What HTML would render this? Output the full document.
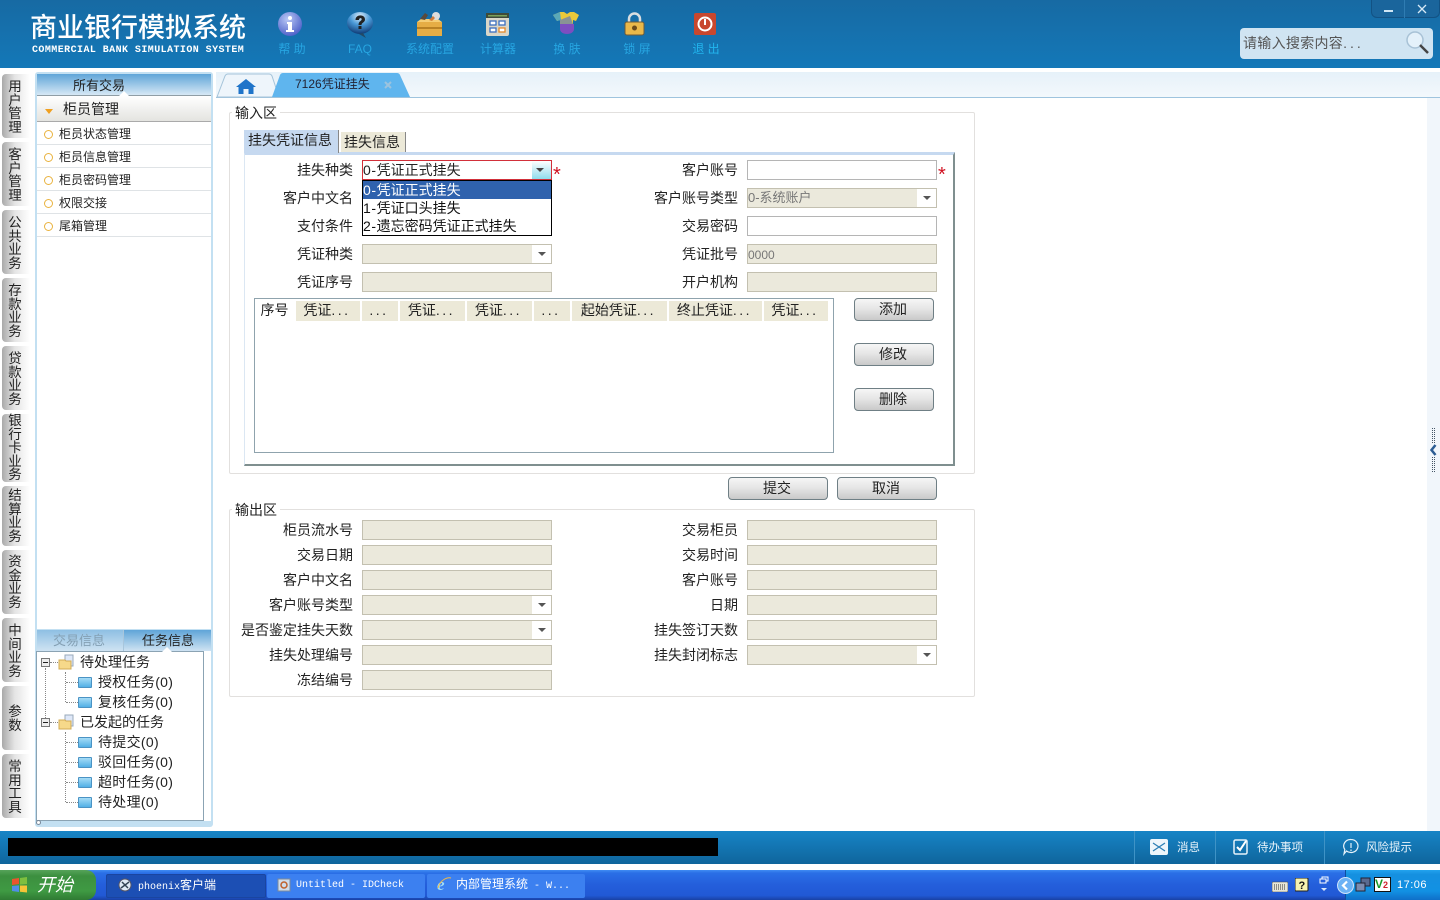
<!DOCTYPE html>
<html lang="zh"><head><meta charset="utf-8"><title>商业银行模拟系统</title>
<style>
html,body{margin:0;padding:0;width:1440px;height:900px;overflow:hidden;background:#fff}
body{font-family:"Liberation Sans","Noto Sans CJK SC",sans-serif;font-size:14px;color:#222;position:relative}
div,span,svg{position:absolute;box-sizing:border-box}
.t{white-space:nowrap}
#hd{left:0;top:0;width:1440px;height:68px;background:linear-gradient(#176aa3,#1478b8)}
.nl{top:41px;height:16px;line-height:16px;font-size:12px;color:#27a6e2;text-align:center;width:70px;white-space:nowrap}
.st{left:2px;width:28px;background:linear-gradient(90deg,#a9a9a9,#e4e4e4 45%,#fff);border-radius:4px 0 0 4px;text-align:center;line-height:13.5px;font-size:13.5px;color:#222;padding-left:0}
.st span{position:static;display:block;width:26px}
.mi{left:37px;width:174px;height:23px;border-bottom:1px solid #dfe3e6;background:#fff;font-size:12px;line-height:25px;padding-left:22px;color:#222}
.mi i{position:absolute;left:7px;top:8px;width:7px;height:7px;border:1.5px solid #e9b33f;border-radius:50%}
.l{width:130px;height:20px;line-height:20px;text-align:right;white-space:nowrap;color:#222}
.f{width:190px;height:20px;border:1px solid #c3c0b0;background:#ebe9dc;font-size:12px;line-height:18px;color:#777;padding-left:0;white-space:nowrap}
.w{background:#fff;border-color:#b5b5b5}
.ar{right:0;top:0;width:19px;height:18px;background:#fff}
.ar:after{content:"";position:absolute;left:6px;top:7px;border:4px solid transparent;border-top:4px solid #555;border-bottom:0}
.th{top:301px;height:20px;background:#ece9d8;border-right:1px solid #fff;line-height:19px;text-align:center;color:#222;white-space:nowrap;padding-right:2px}
.d{position:static;letter-spacing:2.5px}
.n{position:static;letter-spacing:.6px}
.b{border:1px solid #6f7f85;border-radius:4px;background:linear-gradient(#f6f6f6,#e6e6e6 45%,#c9c9c9);text-align:center;color:#222;padding-right:2px}
.tr{white-space:nowrap;height:20px;line-height:20px;font-size:14px;color:#222;letter-spacing:.3px}
.fo{left:78px;width:14px;height:11px;background:linear-gradient(#a6dcf6,#52b0e6);border:1px solid #4a93c4;border-radius:1px}
.dh{height:0;border-top:1px dotted #888;width:12px}
.dv{width:0;border-left:1px dotted #888}
.tb{top:874px;height:24px;line-height:22px;font-family:"Liberation Mono","Noto Sans CJK SC",monospace;font-size:10px;color:#fff;white-space:nowrap;border-radius:2px}
.tb span{position:static;font-size:12px}
.tb.m{line-height:24px}
.notch{border:5px solid transparent;border-bottom:5px solid #fff;border-top:0}
</style></head><body>

<div id="hd"></div>
<div class="t" style="left:30px;top:11px;font-size:27px;line-height:34px;color:#fff;letter-spacing:0;font-weight:500">商业银行模拟系统</div>
<div class="t" style="left:32px;top:43px;font-family:'Liberation Mono',monospace;font-weight:bold;font-size:10px;line-height:14px;color:#fff;letter-spacing:.43px;padding-top:1px">COMMERCIAL BANK SIMULATION SYSTEM</div>

<svg style="left:277px;top:11px" width="26" height="26" viewBox="0 0 26 26"><defs><radialGradient id="g1" cx=".4" cy=".3" r=".8"><stop offset="0" stop-color="#b9c8f5"/><stop offset="1" stop-color="#4256c4"/></radialGradient></defs><circle cx="13" cy="13" r="12" fill="url(#g1)"/><circle cx="13" cy="7" r="2" fill="#fff"/><path d="M10 11h5v8h2v2H9v-2h2v-6h-1z" fill="#fff"/></svg>
<svg style="left:346px;top:11px" width="28" height="27" viewBox="0 0 28 27"><defs><radialGradient id="g2" cx=".5" cy=".2" r=".85"><stop offset="0" stop-color="#dfeefa"/><stop offset=".45" stop-color="#4a9ad8"/><stop offset="1" stop-color="#08306a"/></radialGradient></defs><ellipse cx="14" cy="12" rx="13" ry="11" fill="url(#g2)"/><path d="M17 22l3 5-7-4z" fill="#234a66"/><path d="M9.500 9c0-6 9.500-6 9.500-.5 0 3-3.500 3-3.500 5.500h-3c0-4 3.200-4 3.200-5.800 0-1.500-2.700-1.500-2.700.8z" fill="#222"/><rect x="12.500" y="15" width="3" height="3" fill="#222"/></svg>
<svg style="left:416px;top:11px" width="27" height="26" viewBox="0 0 27 26"><rect x="1" y="11" width="25" height="14" fill="#e6ad45"/><rect x="1" y="16" width="25" height="2" fill="#b98124"/><path d="M1 11l4-3h17l4 3z" fill="#f5cd75"/><path d="M4 8l5-6 3 2-3 5z" fill="#5a4a3c"/><circle cx="20" cy="5" r="4" fill="#ddd"/><path d="M13 9l4-4 2 2-3 3z" fill="#d07a3a"/></svg>
<svg style="left:486px;top:13px" width="23" height="23" viewBox="0 0 23 23"><rect width="23" height="23" rx="2" fill="#d9d6c8"/><rect width="23" height="5" fill="#3e4a3a"/><rect x="2" y="2" width="19" height="1.500" fill="#7aa05a"/><g fill="#fff" stroke="#3c6fc0" stroke-width="1.300"><rect x="4" y="8" width="6" height="4"/><rect x="13" y="8" width="6" height="4"/><rect x="4" y="15" width="6" height="4"/><rect x="13" y="15" width="6" height="4" stroke="#e08a2c"/></g></svg>
<svg style="left:552px;top:11px" width="28" height="24" viewBox="0 0 28 24"><path d="M1 4l7-3h4l3 2 3-2h4l5 3-3 6-3-1v5H8V9l-3 1z" fill="#e9c93a"/><path d="M1 4l7-3 1 8-4 1z" fill="#5aa8b8"/><path d="M8 13h14v5c0 3-3 5-7 5s-7-2-7-5z" fill="#7d4ec0"/><path d="M8 9l10-4 3 8H8z" fill="#4a6fd0" opacity=".6"/></svg>
<svg style="left:624px;top:12px" width="21" height="24" viewBox="0 0 21 24"><path d="M5 11V7a5.500 5.500 0 0 1 11 0v4" fill="none" stroke="#d8dde0" stroke-width="2.500"/><rect x="1" y="10" width="19" height="13" rx="2" fill="#e9b84a" stroke="#6b5a3a"/><circle cx="10.500" cy="16" r="2.500" fill="#6b4a1a"/></svg>
<svg style="left:694px;top:13px" width="22" height="22" viewBox="0 0 22 22"><rect width="22" height="22" rx="2" fill="#c8472e"/><circle cx="11" cy="11" r="6.500" fill="none" stroke="#fff" stroke-width="2"/><rect x="10" y="6" width="2" height="6" fill="#fff"/></svg>

<div class="nl" style="left:257px">帮 助</div>
<div class="nl" style="left:325px">FAQ</div>
<div class="nl" style="left:395px">系统配置</div>
<div class="nl" style="left:463px">计算器</div>
<div class="nl" style="left:532px">换 肤</div>
<div class="nl" style="left:602px">锁 屏</div>
<div class="nl" style="left:671px;color:#22b5ee">退 出</div>

<div style="left:1371px;top:0;width:69px;height:18px;background:#1a659c;border:1px solid #125284;border-top:0;border-radius:0 0 6px 6px"></div>
<div style="left:1404px;top:0;width:1px;height:18px;background:#2f7cb2"></div>
<div style="left:1384px;top:10px;width:9px;height:2px;background:#cfe6f5"></div>
<svg style="left:1417px;top:4px" width="10" height="10" viewBox="0 0 10 10"><path d="M1 1l8 8M9 1L1 9" stroke="#d6e9f6" stroke-width="1.300"/></svg>

<div style="left:1240px;top:28px;width:193px;height:31px;background:#d0e4f2;border-radius:4px"></div>
<div class="t" style="left:1243px;top:33px;line-height:20px;font-size:14px;color:#555;letter-spacing:.3px">请输入搜索内容<span class="d" style="letter-spacing:3px">...</span></div>
<svg style="left:1405px;top:30px" width="25" height="25" viewBox="0 0 25 25"><circle cx="10" cy="10" r="8" fill="#e4f1fa" stroke="#a8c2d6" stroke-width="1.500"/><path d="M15 15l8 8" stroke="#444" stroke-width="2.500"/></svg>

<!-- left vertical tabs -->
<div class="st" style="top:74px;height:64px;padding-top:6px"><span>用<br>户<br>管<br>理</span></div>
<div class="st" style="top:142px;height:64px;padding-top:6px"><span>客<br>户<br>管<br>理</span></div>
<div class="st" style="top:210px;height:64px;padding-top:6px"><span>公<br>共<br>业<br>务</span></div>
<div class="st" style="top:278px;height:64px;padding-top:6px"><span>存<br>款<br>业<br>务</span></div>
<div class="st" style="top:346px;height:64px;padding-top:6px"><span>贷<br>款<br>业<br>务</span></div>
<div class="st" style="top:414px;height:68px;padding-top:0"><span>银<br>行<br>卡<br>业<br>务</span></div>
<div class="st" style="top:486px;height:60px;padding-top:3px"><span>结<br>算<br>业<br>务</span></div>
<div class="st" style="top:550px;height:64px;padding-top:5px"><span>资<br>金<br>业<br>务</span></div>
<div class="st" style="top:618px;height:64px;padding-top:6px"><span>中<br>间<br>业<br>务</span></div>
<div class="st" style="top:686px;height:64px;padding-top:19px"><span>参<br>数</span></div>
<div class="st" style="top:754px;height:64px;padding-top:6px"><span>常<br>用<br>工<br>具</span></div>

<!-- left panel -->
<div style="left:35px;top:72px;width:178px;height:755px;background:#c3e0f2;border-radius:3px"></div>
<div style="left:37px;top:74px;width:174px;height:21px;background:linear-gradient(#5fa5d8,#d6e8f5)"></div>
<div class="t" style="left:73px;top:76px;font-size:13px;line-height:19px;color:#222">所有交易</div>
<div style="left:37px;top:95px;width:174px;height:1px;background:#8f9da5"></div>
<div style="left:37px;top:96px;width:174px;height:533px;background:#fff"></div>
<div class="notch" style="left:119px;top:91px"></div>
<div style="left:37px;top:96px;width:174px;height:26px;background:linear-gradient(#fff,#e4e4e0);border-bottom:1px solid #aaa"></div>
<div style="left:45px;top:109px;border:4px solid transparent;border-top:5px solid #f0a020;border-bottom:0"></div>
<div class="t" style="left:63px;top:99px;line-height:20px;font-size:14px">柜员管理</div>
<div class="mi" style="top:122px"><i></i>柜员状态管理</div>
<div class="mi" style="top:145px"><i></i>柜员信息管理</div>
<div class="mi" style="top:168px"><i></i>柜员密码管理</div>
<div class="mi" style="top:191px"><i></i>权限交接</div>
<div class="mi" style="top:214px"><i></i>尾箱管理</div>

<div style="left:37px;top:630px;width:174px;height:21px;background:linear-gradient(#5fa5d8,#cfe3f2)"></div>
<div style="left:37px;top:630px;width:86px;height:21px;background:linear-gradient(#8ebfe3,#cfe3f2)"></div>
<div style="left:123px;top:630px;width:1px;height:21px;background:#a8c6dc"></div>
<div class="t" style="left:53px;top:631px;font-size:13px;line-height:19px;color:#84a0b4">交易信息</div>
<div class="t" style="left:142px;top:631px;font-size:13px;line-height:19px;color:#222">任务信息</div>
<div style="left:36px;top:651px;width:168px;height:170px;background:#fff;border:1px solid #8ba3b3"></div>
<div style="left:204px;top:651px;width:7px;height:170px;background:#fff"></div>
<div class="notch" style="left:162px;top:647px;border-bottom-color:#fff"></div>
<div style="left:36px;top:820px;width:5px;height:5px;border:1px solid #789;border-radius:50%;background:#fff"></div>

<div class="dv" style="left:45px;top:668px;height:56px"></div>
<div class="dv" style="left:65px;top:672px;height:30px"></div>
<div class="dv" style="left:65px;top:732px;height:70px"></div>
<div class="dh" style="left:50px;top:662px;width:8px"></div>
<div class="dh" style="left:50px;top:722px;width:8px"></div>
<div class="dh" style="left:66px;top:682px"></div>
<div class="dh" style="left:66px;top:702px"></div>
<div class="dh" style="left:66px;top:742px"></div>
<div class="dh" style="left:66px;top:762px"></div>
<div class="dh" style="left:66px;top:782px"></div>
<div class="dh" style="left:66px;top:802px"></div>
<div style="left:41px;top:658px;width:9px;height:9px;background:#eee;border:1px solid #777"></div><div style="left:43px;top:662px;width:5px;height:1px;background:#222"></div>
<div style="left:41px;top:718px;width:9px;height:9px;background:#eee;border:1px solid #777"></div><div style="left:43px;top:722px;width:5px;height:1px;background:#222"></div>
<svg style="left:58px;top:654px" width="16" height="16" viewBox="0 0 16 16"><rect x="7" y="1" width="8" height="11" fill="#dfe8f8" stroke="#9ab"/><path d="M1 6h6l1 1h5v8H1z" fill="#f6d98a" stroke="#d3ac55"/></svg>
<svg style="left:58px;top:714px" width="16" height="16" viewBox="0 0 16 16"><rect x="7" y="1" width="8" height="11" fill="#dfe8f8" stroke="#9ab"/><path d="M1 6h6l1 1h5v8H1z" fill="#f6d98a" stroke="#d3ac55"/></svg>
<div class="fo" style="top:677px"></div><div class="fo" style="top:697px"></div><div class="fo" style="top:737px"></div><div class="fo" style="top:757px"></div><div class="fo" style="top:777px"></div><div class="fo" style="top:797px"></div>
<div class="tr" style="left:80px;top:652px;letter-spacing:0">待处理任务</div>
<div class="tr" style="left:98px;top:672px">授权任务(0)</div>
<div class="tr" style="left:98px;top:692px">复核任务(0)</div>
<div class="tr" style="left:80px;top:712px;letter-spacing:0">已发起的任务</div>
<div class="tr" style="left:98px;top:732px">待提交(0)</div>
<div class="tr" style="left:98px;top:752px">驳回任务(0)</div>
<div class="tr" style="left:98px;top:772px">超时任务(0)</div>
<div class="tr" style="left:98px;top:792px">待处理(0)</div>

<!-- main tabs -->
<div style="left:216px;top:72px;width:1224px;height:25px;background:linear-gradient(#e6f1f9,#f3f8fc)"></div>
<div style="left:216px;top:97px;width:1224px;height:1px;background:#9fc4de"></div>
<div style="left:1427px;top:98px;width:13px;height:733px;background:#f1f6fb"></div>
<svg style="left:216px;top:72px" width="200" height="26" viewBox="0 0 200 26"><path d="M1 25L9 4Q10 2 12 2h41q2 0 3 2l7 21z" fill="#eef5fb" stroke="#a5c4da"/><path d="M56 25L64 3Q65 1 67 1h114q2 0 3 2l10 22z" fill="#5fb5ee"/><path d="M20 15l10-8 10 8h-2.500v7h-5v-5h-5v5h-5v-7z" fill="#1f74c9"/></svg>
<div class="t" style="left:295px;top:75px;font-size:12px;line-height:18px;color:#223">7126凭证挂失</div>
<svg style="left:384px;top:81px" width="8" height="8" viewBox="0 0 8 8"><path d="M1 1l6 6M7 1L1 7" stroke="#9cc3de" stroke-width="2"/></svg>

<!-- fieldset 1 -->
<div style="left:229px;top:112px;width:746px;height:362px;border:1px solid #e2e0de;border-radius:2px"></div>
<div class="t" style="left:232px;top:104px;background:#fff;padding:0 3px;line-height:18px">输入区</div>

<div style="left:244px;top:152px;width:711px;height:314px;background:#fff;border-top:3px solid #c6d9f0;border-left:1px solid #dbe7f3;border-right:2px solid #7f8f8f;border-bottom:2px solid #7f8f8f"></div>
<div style="left:244px;top:130px;width:95px;height:23px;background:#c6d9f0;text-align:center;line-height:20px;border-right:1px solid #888;white-space:nowrap;padding-right:2px">挂失凭证信息</div>
<div style="left:341px;top:132px;width:65px;height:20px;background:#ece9d8;text-align:center;line-height:20px;border-right:1px solid #888;white-space:nowrap;padding-right:2px">挂失信息</div>

<div class="l" style="left:223px;top:160px">挂失种类</div>
<div class="l" style="left:223px;top:188px">客户中文名</div>
<div class="l" style="left:223px;top:216px">支付条件</div>
<div class="l" style="left:223px;top:244px">凭证种类</div>
<div class="l" style="left:223px;top:272px">凭证序号</div>
<div class="l" style="left:608px;top:160px">客户账号</div>
<div class="l" style="left:608px;top:188px">客户账号类型</div>
<div class="l" style="left:608px;top:216px">交易密码</div>
<div class="l" style="left:608px;top:244px">凭证批号</div>
<div class="l" style="left:608px;top:272px">开户机构</div>

<div class="f w" style="left:362px;top:160px;border-color:#d2303a;color:#222;font-size:14px"><span class="n">0-</span>凭证正式挂失<div style="right:0;top:0;width:19px;height:18px;background:linear-gradient(#fff,#8fdcec)"></div><div style="left:173px;top:7px;border:4px solid transparent;border-top:4px solid #444;border-bottom:0"></div></div>
<div class="t" style="left:553px;top:164px;color:#d01020;font-size:20px;line-height:22px">*</div>
<div class="f" style="left:362px;top:244px"><div class="ar"></div></div>
<div class="f" style="left:362px;top:272px"></div>
<div class="f w" style="left:747px;top:160px"></div>
<div class="t" style="left:938px;top:164px;color:#d01020;font-size:20px;line-height:22px">*</div>
<div class="f" style="left:747px;top:188px;font-size:13px">0-系统账户<div class="ar"></div></div>
<div class="f w" style="left:747px;top:216px"></div>
<div class="f" style="left:747px;top:244px;line-height:20px">0000</div>
<div class="f" style="left:747px;top:272px"></div>

<div style="left:362px;top:180px;width:190px;height:56px;background:#fff;border:1px solid #000;font-size:14px;line-height:18px;white-space:nowrap;color:#111">
<div style="left:0;top:0;width:188px;height:18px;background:#2f62ad;color:#fff"><span class="n">0-</span>凭证正式挂失</div>
<div style="left:0;top:18px"><span class="n">1-</span>凭证口头挂失</div>
<div style="left:0;top:36px"><span class="n">2-</span>遗忘密码凭证正式挂失</div>
</div>

<div style="left:254px;top:298px;width:580px;height:155px;background:#fff;border:1px solid #8fa3ad"></div>
<div class="th" style="left:256px;width:40px;background:#fff">序号</div>
<div class="th" style="left:296px;width:65px">凭证<span class="d">...</span></div>
<div class="th" style="left:362px;width:37px"><span class="d">...</span></div>
<div class="th" style="left:400px;width:66px">凭证<span class="d">...</span></div>
<div class="th" style="left:467px;width:66px">凭证<span class="d">...</span></div>
<div class="th" style="left:534px;width:37px"><span class="d">...</span></div>
<div class="th" style="left:572px;width:96px">起始凭证<span class="d">...</span></div>
<div class="th" style="left:669px;width:94px">终止凭证<span class="d">...</span></div>
<div class="th" style="left:764px;width:65px">凭证<span class="d">...</span></div>

<div class="b" style="left:854px;top:298px;width:80px;height:23px;line-height:20px">添加</div>
<div class="b" style="left:854px;top:343px;width:80px;height:23px;line-height:20px">修改</div>
<div class="b" style="left:854px;top:388px;width:80px;height:23px;line-height:20px">删除</div>
<div class="b" style="left:728px;top:477px;width:100px;height:23px;line-height:20px">提交</div>
<div class="b" style="left:837px;top:477px;width:100px;height:23px;line-height:20px">取消</div>

<!-- fieldset 2 -->
<div style="left:229px;top:509px;width:746px;height:188px;border:1px solid #e2e0de;border-radius:2px"></div>
<div class="t" style="left:232px;top:501px;background:#fff;padding:0 3px;line-height:18px">输出区</div>

<div class="l" style="left:223px;top:520px">柜员流水号</div>
<div class="l" style="left:223px;top:545px">交易日期</div>
<div class="l" style="left:223px;top:570px">客户中文名</div>
<div class="l" style="left:223px;top:595px">客户账号类型</div>
<div class="l" style="left:223px;top:620px">是否鉴定挂失天数</div>
<div class="l" style="left:223px;top:645px">挂失处理编号</div>
<div class="l" style="left:223px;top:670px">冻结编号</div>
<div class="l" style="left:608px;top:520px">交易柜员</div>
<div class="l" style="left:608px;top:545px">交易时间</div>
<div class="l" style="left:608px;top:570px">客户账号</div>
<div class="l" style="left:608px;top:595px">日期</div>
<div class="l" style="left:608px;top:620px">挂失签订天数</div>
<div class="l" style="left:608px;top:645px">挂失封闭标志</div>

<div class="f" style="left:362px;top:520px"></div>
<div class="f" style="left:362px;top:545px"></div>
<div class="f" style="left:362px;top:570px"></div>
<div class="f" style="left:362px;top:595px"><div class="ar"></div></div>
<div class="f" style="left:362px;top:620px"><div class="ar"></div></div>
<div class="f" style="left:362px;top:645px"></div>
<div class="f" style="left:362px;top:670px"></div>
<div class="f" style="left:747px;top:520px"></div>
<div class="f" style="left:747px;top:545px"></div>
<div class="f" style="left:747px;top:570px"></div>
<div class="f" style="left:747px;top:595px"></div>
<div class="f" style="left:747px;top:620px"></div>
<div class="f" style="left:747px;top:645px"><div class="ar"></div></div>

<!-- collapse handle -->
<div style="left:1432px;top:428px;width:3px;height:15px;border-left:1px dotted #456;border-right:1px dotted #456"></div>
<div style="left:1432px;top:457px;width:3px;height:15px;border-left:1px dotted #456;border-right:1px dotted #456"></div>
<svg style="left:1430px;top:444px" width="7" height="12" viewBox="0 0 7 12"><path d="M5.500 1L1.500 6l4 5" fill="none" stroke="#2c5d94" stroke-width="2.500"/></svg>

<!-- status bar -->
<div style="left:0;top:831px;width:1440px;height:33px;background:linear-gradient(#1784c6,#0f659c)"></div>
<div style="left:8px;top:838px;width:710px;height:18px;background:#000"></div>
<div style="left:1134px;top:831px;width:1px;height:33px;background:#3f93c6"></div>
<div style="left:1215px;top:831px;width:1px;height:33px;background:#3f93c6"></div>
<div style="left:1324px;top:831px;width:1px;height:33px;background:#3f93c6"></div>
<svg style="left:1150px;top:839px" width="18" height="16" viewBox="0 0 18 16"><rect width="18" height="16" rx="2" fill="#eef6fb"/><path d="M3 4l6 4 6-4M3 12l6-4 6 4" fill="none" stroke="#2b7fb5" stroke-width="1.200"/></svg>
<svg style="left:1233px;top:838px" width="16" height="18" viewBox="0 0 16 18"><rect x="1" y="2" width="13" height="14" rx="1.500" fill="none" stroke="#e6f2fa" stroke-width="1.500"/><path d="M4 9l3 3 6-9" fill="none" stroke="#fff" stroke-width="2"/></svg>
<svg style="left:1342px;top:838px" width="18" height="18" viewBox="0 0 18 18"><path d="M9 1.500a7 6.500 0 1 1-4.500 11.500L2 16l.8-4.500A7 6.500 0 0 1 9 1.500z" fill="none" stroke="#e6f2fa" stroke-width="1.200"/><path d="M9 5v5M9 11.500v1.500" stroke="#e6f2fa" stroke-width="1.200"/></svg>
<div class="t" style="left:1177px;top:839px;line-height:18px;font-size:11.500px;color:#eaf4fb">消息</div>
<div class="t" style="left:1257px;top:839px;line-height:18px;font-size:11.500px;color:#eaf4fb">待办事项</div>
<div class="t" style="left:1366px;top:839px;line-height:18px;font-size:11.500px;color:#eaf4fb">风险提示</div>

<!-- XP taskbar -->
<div style="left:0;top:870px;width:1440px;height:30px;background:linear-gradient(#3f8cf3 0,#2a6fe6 10%,#245edb 50%,#2159d5 85%,#1941a5)"></div>
<div style="left:0;top:870px;width:96px;height:30px;background:linear-gradient(#56a35a,#3c8f3f 20%,#3f9a43 70%,#2f7a33);border-radius:0 10px 10px 0"></div>
<svg style="left:10px;top:875px" width="20" height="20" viewBox="0 0 20 20"><path d="M2 4l7-1v6l-7 1z" fill="#e8552e"/><path d="M10 3l7-1v7l-7 .6z" fill="#7ebf3f"/><path d="M2 11l7-.6v6.600l-7-1z" fill="#4f8ee8"/><path d="M10 10.500h7v7l-7-.8z" fill="#f6c437"/></svg>
<div class="t" style="left:37px;top:873px;font-size:18px;line-height:24px;font-style:italic;color:#fff">开始</div>
<div class="tb" style="left:106px;width:160px;background:#1c4fb4;padding-left:31px;border:1px solid #1a45a0">phoenix<span>客户端</span></div>
<div class="tb m" style="left:267px;width:158px;background:#3c80f0;padding-left:29px">Untitled - IDCheck</div>
<div class="tb" style="left:427px;width:158px;background:#3c80f0;padding-left:29px"><span>内部管理系统</span> - W...</div>
<svg style="left:118px;top:878px" width="14" height="14" viewBox="0 0 14 14"><circle cx="7" cy="7" r="6" fill="#dfeaf6" stroke="#556"/><path d="M3 10l8-6M4 4l6 6" stroke="#345" stroke-width="1.500"/></svg>
<svg style="left:277px;top:878px" width="14" height="14" viewBox="0 0 14 14"><rect x="1" y="1" width="12" height="12" fill="#cfdcea" stroke="#7c8a9a"/><circle cx="7" cy="7" r="3" fill="none" stroke="#c0612c" stroke-width="1.500"/></svg>
<svg style="left:436px;top:876px" width="16" height="17" viewBox="0 0 16 17"><text x="1" y="14" font-family="Liberation Serif,serif" font-style="italic" font-weight="bold" font-size="17" fill="#9fdcf8">e</text><path d="M2 12C4 4 11 1 15 2" fill="none" stroke="#f0b94a" stroke-width="1"/></svg>

<div style="left:1345px;top:870px;width:95px;height:30px;background:linear-gradient(#22a3ee,#1590e0 15%,#1291e3 70%,#0f6fc8);border-left:1px solid #0f4f9e"></div>
<svg style="left:1272px;top:880px" width="16" height="12" viewBox="0 0 16 12"><rect y="2" width="16" height="10" rx="1" fill="#e8e6d8" stroke="#444" stroke-width=".6"/><path d="M2 5h12M2 7h12M2 9h12" stroke="#333" stroke-dasharray="1 1"/></svg>
<svg style="left:1295px;top:878px" width="14" height="15" viewBox="0 0 14 15"><rect width="13" height="13" rx="1" fill="#f7f3b0" stroke="#222"/><text x="3.500" y="11" font-family="Liberation Sans,sans-serif" font-weight="bold" font-size="11" fill="#111">?</text></svg>
<svg style="left:1319px;top:876px" width="10" height="17" viewBox="0 0 10 17"><rect x="3" y="1" width="6" height="4" fill="none" stroke="#fff"/><rect x="1" y="3" width="6" height="4" fill="#245edb" stroke="#fff"/><path d="M2 12h6l-3 3z" fill="#dbe8fa"/></svg>
<svg style="left:1337px;top:877px" width="17" height="17" viewBox="0 0 17 17"><circle cx="8.500" cy="8.500" r="8" fill="#6cb2f5" stroke="#cfe4fb"/><path d="M10 4.500L6 8.500l4 4" fill="none" stroke="#fff" stroke-width="2.200"/></svg>
<svg style="left:1355px;top:877px" width="16" height="16" viewBox="0 0 16 16"><rect x="6" y="1" width="9" height="8" fill="#5a6a90" stroke="#223"/><rect x="1" y="6" width="9" height="8" fill="#7c8cb0" stroke="#223"/></svg>
<div style="left:1374px;top:877px;width:17px;height:15px;background:#fff;border:1px solid #111;font-family:'Liberation Sans',sans-serif;font-size:12px;line-height:13px;font-weight:bold;color:#189a2a;white-space:nowrap;overflow:hidden">V<span style="position:static;color:#d0202a;font-size:9px">2</span></div>
<div class="t" style="left:1397px;top:877px;font-size:11px;line-height:16px;color:#fff;letter-spacing:.5px">17:06</div>
</body></html>
